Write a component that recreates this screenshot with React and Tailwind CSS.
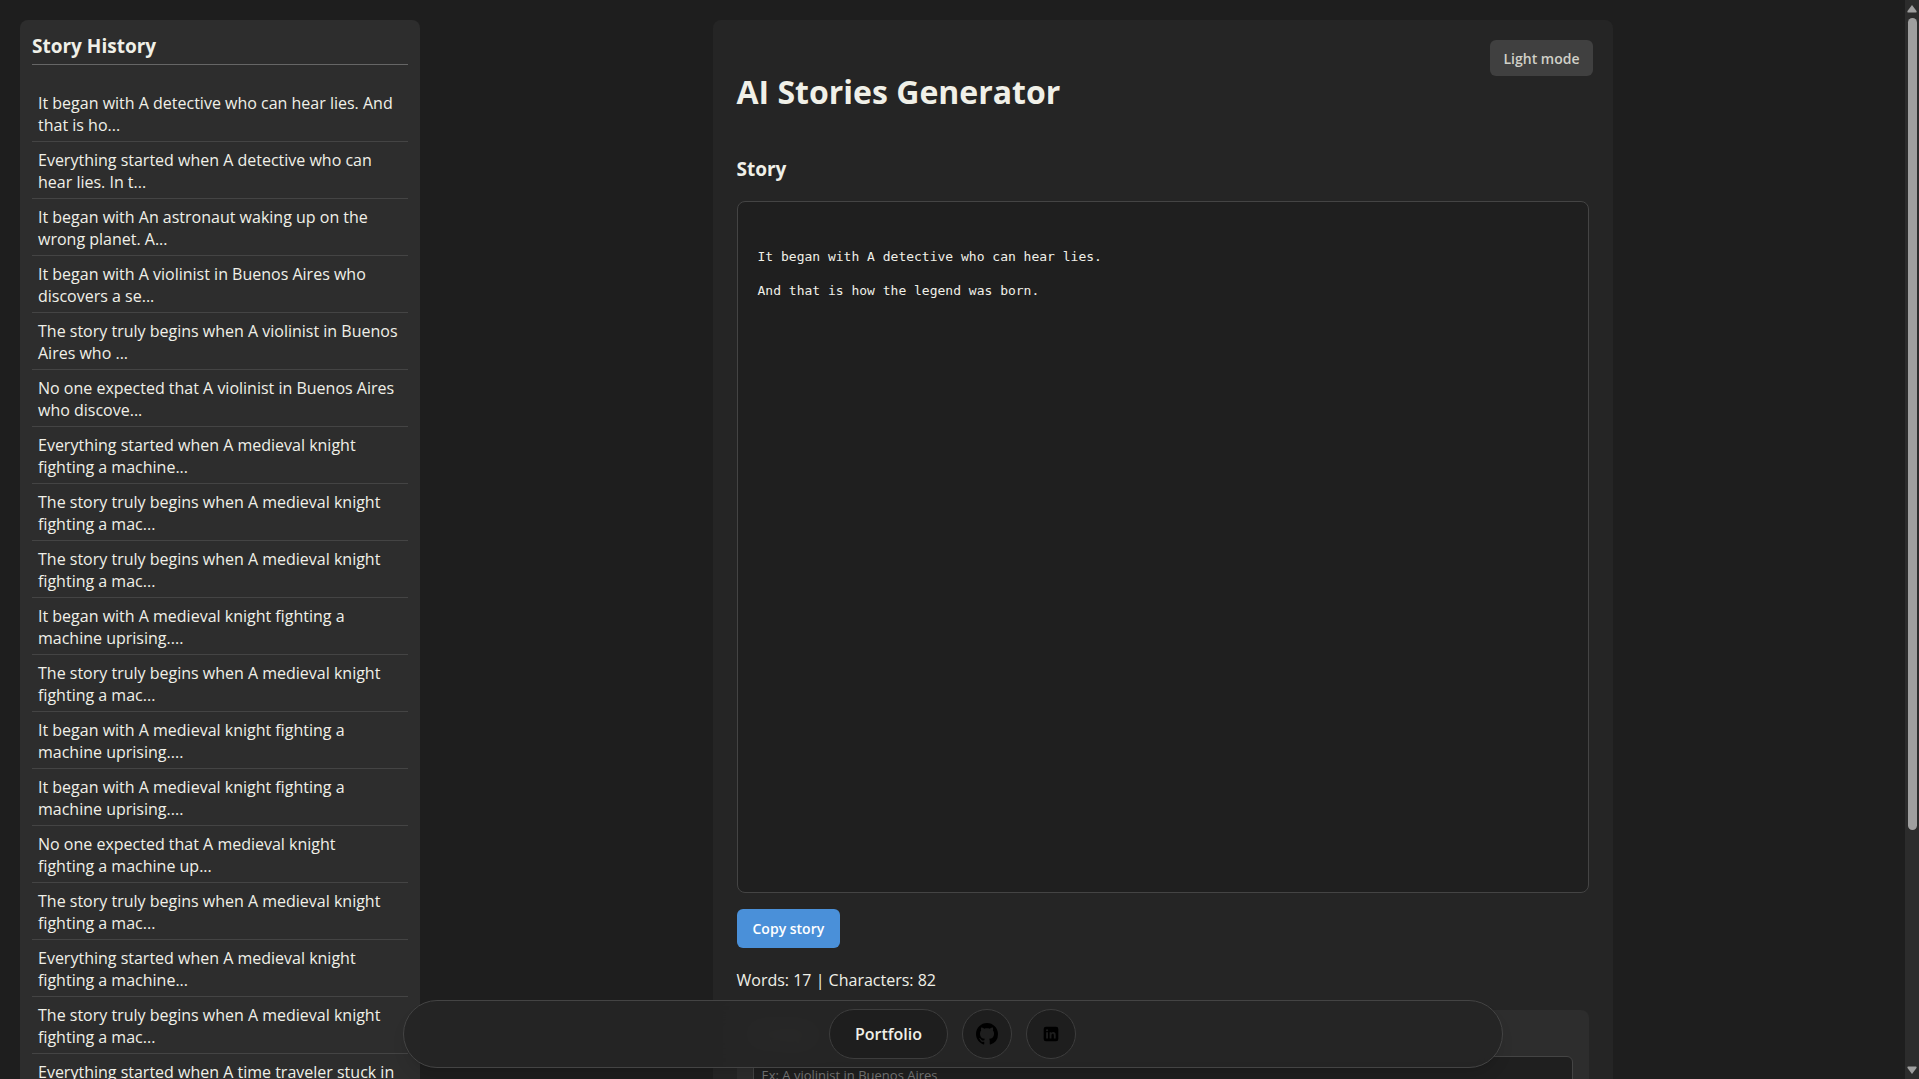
import React, { useState } from "react";

const knightTruly = "The story truly begins when A medieval knight fighting a mac...";
const knightBegan = "It began with A medieval knight fighting a machine uprising....";
const knightStarted = "Everything started when A medieval knight fighting a machine...";

const history = [
  "It began with A detective who can hear lies. And that is ho...",
  "Everything started when A detective who can hear lies. In t...",
  "It began with An astronaut waking up on the wrong planet. A...",
  "It began with A violinist in Buenos Aires who discovers a se...",
  "The story truly begins when A violinist in Buenos Aires who ...",
  "No one expected that A violinist in Buenos Aires who discove...",
  knightStarted,
  knightTruly,
  knightTruly,
  knightBegan,
  knightTruly,
  knightBegan,
  knightBegan,
  "No one expected that A medieval knight fighting\u00a0a machine up...",
  knightTruly,
  knightStarted,
  knightTruly,
  "Everything started when A time traveler stuck in a loop...",
];

const initialStory = `
It began with A detective who can hear lies.

And that is how the legend was born.`;

const HistoryPanel = () => (
  <aside className="w-[400px] shrink-0 rounded-lg bg-[#2d2d2d] p-3">
    <h2 className="border-b border-[#666] pb-1 text-[19px] leading-7 font-bold">
      Story History
    </h2>
    <ul className="mt-5">
      {history.map((title, index) => (
        <li key={index} className="border-b border-[#444]">
          <button
            type="button"
            className="w-full cursor-pointer px-1.5 pt-[7px] pb-[5px] text-left text-[16px] leading-[22px]"
          >
            {title}
          </button>
        </li>
      ))}
    </ul>
  </aside>
);

const ContactBar = () => (
  <footer className="absolute inset-x-0 bottom-[11px] mx-auto flex h-[68px] max-w-[1100px] items-center justify-center gap-3.5 rounded-full border border-[#444] bg-[#252525]/95 shadow-lg backdrop-blur-md">
    <a
      href="#portfolio"
      className="flex h-[50px] items-center rounded-full border border-[#3d3d3d] bg-[#1e1e1e] px-[25px] text-[16px] font-semibold"
    >
      Portfolio
    </a>
    <a
      href="#github"
      aria-label="GitHub"
      className="grid size-[50px] place-items-center rounded-full border border-[#3d3d3d] bg-[#1e1e1e] text-black"
    >
      <svg viewBox="0 0 16 16" className="size-[22px]" fill="currentColor">
        <path d="M8 0C3.58 0 0 3.58 0 8c0 3.54 2.29 6.53 5.47 7.59.4.07.55-.17.55-.38 0-.19-.01-.82-.01-1.49-2.01.37-2.53-.49-2.69-.94-.09-.23-.48-.94-.82-1.13-.28-.15-.68-.52-.01-.53.63-.01 1.08.58 1.23.82.72 1.21 1.87.87 2.33.66.07-.52.28-.87.51-1.07-1.78-.2-3.64-.89-3.64-3.95 0-.87.31-1.59.82-2.15-.08-.2-.36-1.02.08-2.12 0 0 .67-.21 2.2.82.64-.18 1.32-.27 2-.27s1.36.09 2 .27c1.53-1.04 2.2-.82 2.2-.82.44 1.1.16 1.92.08 2.12.51.56.82 1.27.82 2.15 0 3.07-1.87 3.75-3.65 3.95.29.25.54.73.54 1.48 0 1.07-.01 1.93-.01 2.2 0 .21.15.46.55.38A8.01 8.01 0 0 0 16 8c0-4.42-3.58-8-8-8z" />
      </svg>
    </a>
    <a
      href="#linkedin"
      aria-label="LinkedIn"
      className="grid size-[50px] place-items-center rounded-full border border-[#3d3d3d] bg-[#1e1e1e] text-black"
    >
      <svg viewBox="0 0 24 24" className="size-[22px]" fill="currentColor">
        <path
          fillRule="evenodd"
          d="M6.5 4h11A2.5 2.5 0 0 1 20 6.500v11a2.500 2.500 0 0 1-2.500 2.500h-11A2.500 2.500 0 0 1 4 17.500v-11A2.500 2.500 0 0 1 6.500 4zM6.700 10v7h2v-7zM7.700 6.700a1.150 1.150 0 1 0 0 2.300 1.150 1.150 0 0 0 0-2.300zM10.500 10v7h2v-3.600c0-1 .5-1.700 1.400-1.700s1.200.7 1.200 1.700V17h2v-4.100c0-2-1-3.100-2.600-3.100-.9 0-1.600.4-2 1.100V10z"
        />
      </svg>
    </a>
  </footer>
);

const Scrollbar = () => (
  <div
    aria-hidden="true"
    className="flex w-3.5 shrink-0 flex-col items-center bg-[#2c2c2c] py-[5px]"
  >
    <svg viewBox="0 0 10 8" className="h-2 w-2.5 fill-[#9f9f9f]">
      <path d="M5 0 L9.500 6 Q10 7.500 9 7.500 H1 Q0 7.500 .5 6Z" />
    </svg>
    <div className="mt-[5px] w-full flex-1 pr-0.5 pl-[3px]">
      <div className="h-31/40 w-full rounded-full bg-[#9f9f9f]" />
    </div>
    <svg viewBox="0 0 10 8" className="h-2 w-2.5 fill-[#9f9f9f]">
      <path d="M5 8 L9.500 2 Q10 .5 9 .5 H1 Q0 .5 .5 2Z" />
    </svg>
  </div>
);

const App = () => {
  const [prompt, setPrompt] = useState("");

  return (
    <div className="flex h-screen overflow-hidden bg-[#1e1e1e] font-['Segoe_UI','Open_Sans',sans-serif] text-[#f0f0e8]">
      <div className="relative min-w-0 flex-1 overflow-hidden">
        <div className="flex pt-5 pl-5">
          <HistoryPanel />
          <div className="flex min-w-0 flex-1 justify-center">
            <main className="relative w-full max-w-[900px] rounded-lg bg-[#252525] p-6">
              <button
                type="button"
                className="absolute top-5 right-5 h-9 cursor-pointer rounded-md bg-[#404040] px-[13px] text-[14px] font-semibold text-[#d0d0c8]"
              >
                Light mode
              </button>
              <h1 className="mt-6 text-[32px] leading-[48px] font-bold">
                AI Stories Generator
              </h1>
              <h2 className="mt-[37px] text-[19px] leading-8 font-bold">
                Story
              </h2>
              <pre className="mt-4 min-h-[692px] rounded-lg border border-[#444] bg-[#1f1f1f] px-5 pt-[29px] font-['Consolas','DejaVu_Sans_Mono',monospace] text-[13px] leading-[17px] whitespace-pre-wrap">
                {initialStory}
              </pre>
              <button
                type="button"
                className="mt-4 h-[39px] cursor-pointer rounded-md bg-[#4a90d9] px-4 text-[14px] font-semibold text-white"
              >
                Copy story
              </button>
              <p className="mt-5 text-[16px] leading-6">
                Words: 17 | Characters: 82
              </p>
              <form className="mt-[18px] rounded-lg bg-[#2d2d2d] px-4 pt-3 pb-6">
                <label htmlFor="prompt" className="block h-[34px] font-bold">
                  Prompt
                </label>
                <input
                  id="prompt"
                  type="text"
                  value={prompt}
                  onChange={(e) => setPrompt(e.target.value)}
                  placeholder="Ex: A violinist in Buenos Aires"
                  className="h-[38px] w-full rounded-md border border-[#444] bg-[#1f1f1f] px-2 text-[13px] placeholder:text-[#757575]"
                />
              </form>
            </main>
          </div>
        </div>
        <ContactBar />
      </div>
      <Scrollbar />
    </div>
  );
};

export default App;
